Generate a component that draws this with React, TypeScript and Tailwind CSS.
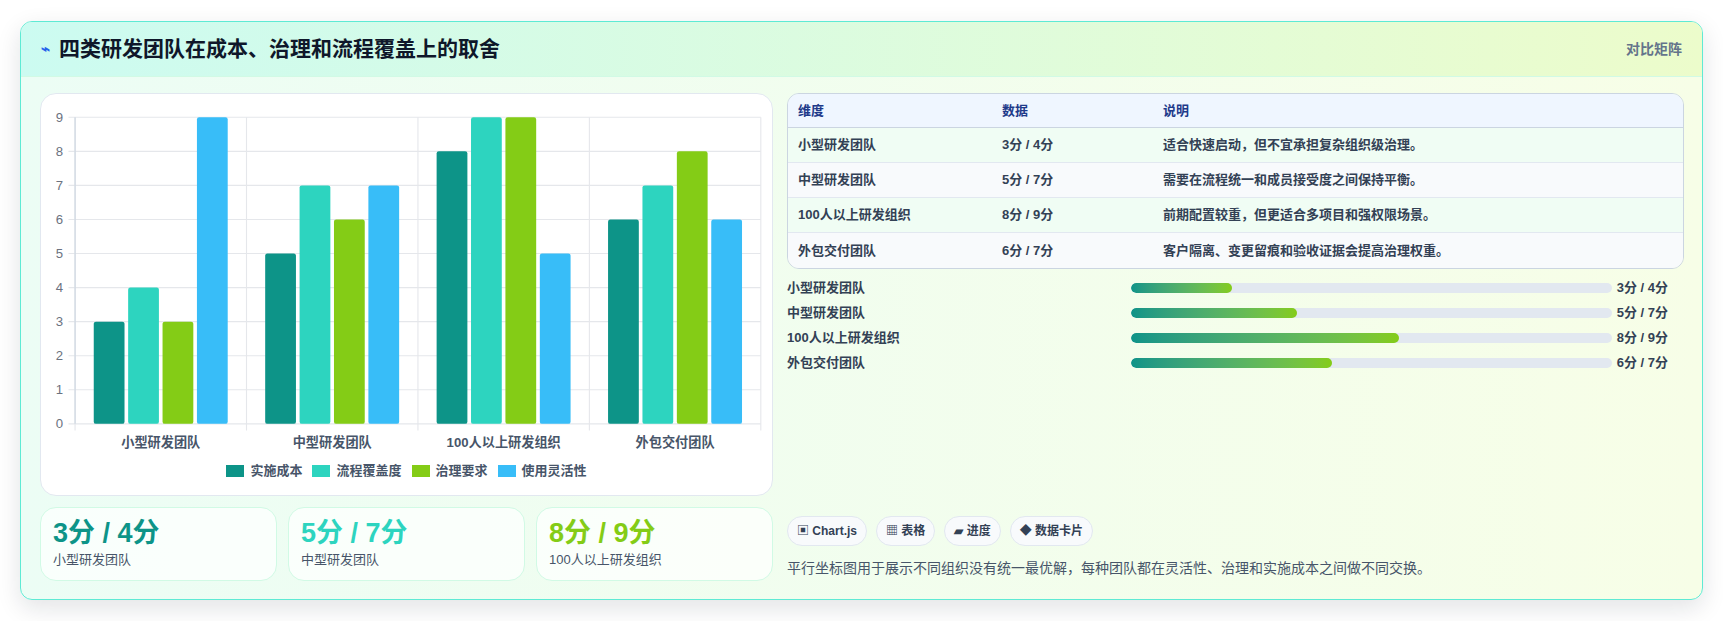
import React from 'react';

const cats = ['小型研发团队', '中型研发团队', '100人以上研发组织', '外包交付团队'];
const series = [
  { name: '实施成本', color: '#0d9488', data: [3, 5, 8, 6] },
  { name: '流程覆盖度', color: '#2dd4bf', data: [4, 7, 9, 7] },
  { name: '治理要求', color: '#84cc16', data: [3, 6, 9, 8] },
  { name: '使用灵活性', color: '#38bdf8', data: [9, 7, 5, 6] },
];

const rows = [
  { n: '小型研发团队', v: '3分 / 4分', d: '适合快速启动，但不宜承担复杂组织级治理。', p: 21 },
  { n: '中型研发团队', v: '5分 / 7分', d: '需要在流程统一和成员接受度之间保持平衡。', p: 34.5 },
  { n: '100人以上研发组织', v: '8分 / 9分', d: '前期配置较重，但更适合多项目和强权限场景。', p: 55.7 },
  { n: '外包交付团队', v: '6分 / 7分', d: '客户隔离、变更留痕和验收证据会提高治理权重。', p: 41.8 },
];

function Chart() {
  const x0 = 31, x1 = 655, y0 = 290, unit = 31;
  const gw = (x1 - x0) / 4;
  return (
    <svg viewBox="0 0 667 330" className="w-[733px] h-[363px]" style={{ fontFamily: '"Liberation Sans","Noto Sans CJK SC",sans-serif' }}>
      {Array.from({ length: 10 }).map((_, i) => (
        <g key={i}>
          <line x1={x0 - 6} x2={x1} y1={y0 - i * unit} y2={y0 - i * unit} stroke="#e5e7eb" />
          <text x={x0 - 11} y={y0 - i * unit + 4} fontSize="12" fill="#6b7280" textAnchor="end">{i}</text>
        </g>
      ))}
      {[0, 1, 2, 3, 4].map((i) => (
        <line key={i} x1={x0 + i * gw} x2={x0 + i * gw} y1={y0 - 9 * unit} y2={y0 + 6} stroke="#e5e7eb" />
      ))}
      <line x1={x0} x2={x0} y1={y0 - 9 * unit} y2={y0} stroke="#cbd5e1" />
      {cats.map((c, ci) => (
        <g key={c}>
          {series.map((s, si) => {
            const h = s.data[ci] * unit;
            const x = x0 + ci * gw + 17 + si * 31.3;
            return <rect key={si} x={x} y={y0 - h} width={28} height={h} fill={s.color} rx="2" />;
          })}
          <text x={x0 + ci * gw + gw / 2} y={y0 + 21} fontSize="12" fontWeight="bold" fill="#475569" textAnchor="middle">{c}</text>
        </g>
      ))}
    </svg>
  );
}

export default function App() {
  return (
    <div className="min-h-screen bg-white pt-[21px] px-[20px]" style={{ fontFamily: '"Liberation Sans","Noto Sans CJK SC",sans-serif' }}>
      <div className="w-[1683px] rounded-xl border border-[#5eead4] bg-gradient-to-r from-[#ecfdf5] to-[#f7fee7] shadow-[0_8px_24px_rgba(15,23,42,0.12)] overflow-hidden">
        <div className="h-[55px] flex items-center justify-between px-[20px] bg-gradient-to-r from-[#ccfbf1] to-[#ecfccb] border-b border-[#d1fae5]">
          <div className="flex items-center gap-[9px]">
            <span className="text-[#2563eb] text-[15px] font-bold">⌁</span>
            <span className="text-[21px] font-bold text-[#0f172a]">四类研发团队在成本、治理和流程覆盖上的取舍</span>
          </div>
          <span className="text-[14px] font-bold text-[#64748b]">对比矩阵</span>
        </div>
        <div className="pt-[16px] pb-[18px] pl-[19px] flex gap-[14px]">
          <div className="w-[733px] flex flex-col gap-[11px]">
            <div className="h-[403px] rounded-2xl border border-[#e2e8f0] bg-white pt-[11px] overflow-hidden">
              <Chart />
              <div className="flex justify-center gap-[10px] text-[13px] font-bold text-[#475569] -mt-[7px]">
                {series.map((s) => (
                  <div key={s.name} className="flex items-center gap-[6px]">
                    <span className="w-[18px] h-[12px]" style={{ background: s.color }} />
                    {s.name}
                  </div>
                ))}
              </div>
            </div>
            <div className="flex gap-[11px]">
              {[
                ['3分 / 4分', '小型研发团队', 'text-[#0d9488]'],
                ['5分 / 7分', '中型研发团队', 'text-[#2dd4bf]'],
                ['8分 / 9分', '100人以上研发组织', 'text-[#84cc16]'],
              ].map(([v, l, c]) => (
                <div key={l} className="w-[237px] h-[74px] rounded-2xl border border-[#d1fae5] bg-white/70 px-[12px] pt-[8px]">
                  <div className={`text-[27px] font-bold leading-[34px] ${c}`}>{v}</div>
                  <div className="text-[13px] text-[#475569]">{l}</div>
                </div>
              ))}
            </div>
          </div>
          <div className="w-[897px] flex flex-col">
            <div className="rounded-xl border border-[#cbd5e1] overflow-hidden text-[13px] font-bold text-[#334155]">
              <div className="h-[34px] flex items-center bg-[#eff6ff] text-[#1e3a8a] border-b border-[#cbd5e1]">
                <div className="w-[214px] pl-[10px]">维度</div>
                <div className="w-[161px]">数据</div>
                <div>说明</div>
              </div>
              {rows.map((r, i) => (
                <div key={r.n} className={`h-[35px] flex items-center ${i % 2 === 0 ? 'bg-[#f0fdf4]' : 'bg-[#f8fafc]'} ${i < 3 ? 'border-b border-[#e2e8f0]' : ''}`}>
                  <div className="w-[214px] pl-[10px]">{r.n}</div>
                  <div className="w-[161px]">{r.v}</div>
                  <div>{r.d}</div>
                </div>
              ))}
            </div>
            <div className="mt-[9px] flex flex-col gap-[6px] text-[13px] font-bold text-[#334155] pr-[16px]">
              {rows.map((r) => (
                <div key={r.n} className="h-[19px] flex items-center">
                  <div className="w-[344px]">{r.n}</div>
                  <div className="w-[481px] h-[10px] rounded-full bg-[#e2e8f0] overflow-hidden">
                    <div className="h-full rounded-full bg-gradient-to-r from-[#0d9488] to-[#84cc16]" style={{ width: `${r.p}%` }} />
                  </div>
                  <div className="flex-1 text-right">{r.v}</div>
                </div>
              ))}
            </div>
            <div className="mt-auto flex gap-[9px] text-[12px] font-bold text-[#334155]">
              {['▣ Chart.js', '▦ 表格', '▰ 进度', '◆ 数据卡片'].map((t) => (
                <span key={t} className="h-[30px] px-[9px] flex items-center rounded-full border border-[#e2e8f0] bg-[#f8fafc]">{t}</span>
              ))}
            </div>
            <div className="mt-[12px] text-[14px] text-[#475569] mb-[2px]">平行坐标图用于展示不同组织没有统一最优解，每种团队都在灵活性、治理和实施成本之间做不同交换。</div>
          </div>
        </div>
      </div>
    </div>
  );
}
